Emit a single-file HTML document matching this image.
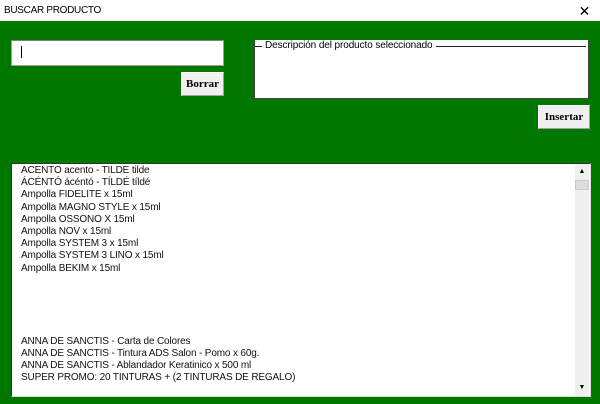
<!DOCTYPE html>
<html><head><meta charset="utf-8"><style>
*{margin:0;padding:0;box-sizing:border-box}
body{width:600px;height:404px;overflow:hidden;background:#007800;font-family:"Liberation Sans",Arial,sans-serif;position:relative}
.title{position:absolute;left:0;top:0;width:600px;height:21px;background:#fff;font-size:10px;letter-spacing:-0.3px;color:#000;padding:5px 0 0 4px}
.x{position:absolute;right:10px;top:3px;font-size:14px}
.inp{position:absolute;left:11px;top:40px;width:213px;height:26px;background:#fff;border:1px solid #a0a0a0;border-top-color:#808080}
.caret{position:absolute;left:9px;top:5px;width:1px;height:12px;background:#000}
.btn{position:absolute;background:#f0f0f0;border:1px solid #fff;border-right-color:#a0a0a0;border-bottom-color:#a0a0a0;font-family:"Liberation Serif",serif;font-weight:bold;font-size:11px;text-align:center}
.frame{position:absolute;left:254px;top:40px;width:335px;height:59px;background:#fff;border:1px solid #444;border-top:none}
.leg{position:absolute;left:7px;top:0px;font-size:10px;letter-spacing:-0.1px;background:#fff;padding:0 3px;z-index:2}
.fl{position:absolute;left:0;right:2px;top:6px;height:1px;background:#222}
.list{position:absolute;left:11px;top:163px;width:580px;height:234px;background:#fff;border:1px solid #333;border-right-color:#ddd;border-bottom-color:#ddd}
.items{position:absolute;left:9px;top:1px;font-size:10px;letter-spacing:-0.15px;line-height:12.2px;color:#111;white-space:pre}
.sb{position:absolute;right:1px;top:0;width:14px;height:232px;background:#f0f0f0}
.ar{position:absolute;left:0;width:14px;height:14px;background:#f0f0f0;font-size:7px;text-align:center;line-height:14px}
.th{position:absolute;left:0;top:16px;width:14px;height:10px;background:#ddd;border:1px solid #ccc}
</style></head><body>
<div class="title">BUSCAR PRODUCTO<span class="x">✕</span></div>
<div class="inp"><div class="caret"></div></div>
<div class="btn" style="left:181px;top:72px;width:43px;height:24px;line-height:22px">Borrar</div>
<div class="frame"><div class="fl"></div><span class="leg">Descripción del producto seleccionado</span></div>
<div class="btn" style="left:538px;top:105px;width:52px;height:24px;line-height:22px">Insertar</div>
<div class="list">
<div class="items">ACENTO acento - TILDE tilde
ÁCÉNTÓ ácéntó - TÍLDÉ tíldé
Ampolla FIDELITE x 15ml
Ampolla MAGNO STYLE x 15ml
Ampolla OSSONO X 15ml
Ampolla NOV x 15ml
Ampolla SYSTEM 3 x 15ml
Ampolla SYSTEM 3 LINO x 15ml
Ampolla BEKIM x 15ml





ANNA DE SANCTIS - Carta de Colores
ANNA DE SANCTIS - Tintura ADS Salon - Pomo x 60g.
ANNA DE SANCTIS - Ablandador Keratinico x 500 ml
SUPER PROMO: 20 TINTURAS + (2 TINTURAS DE REGALO)</div>
<div class="sb"><div class="ar" style="top:1px">▲</div><div class="th"></div><div class="ar" style="bottom:1px">▼</div></div>
</div>
</body></html>
